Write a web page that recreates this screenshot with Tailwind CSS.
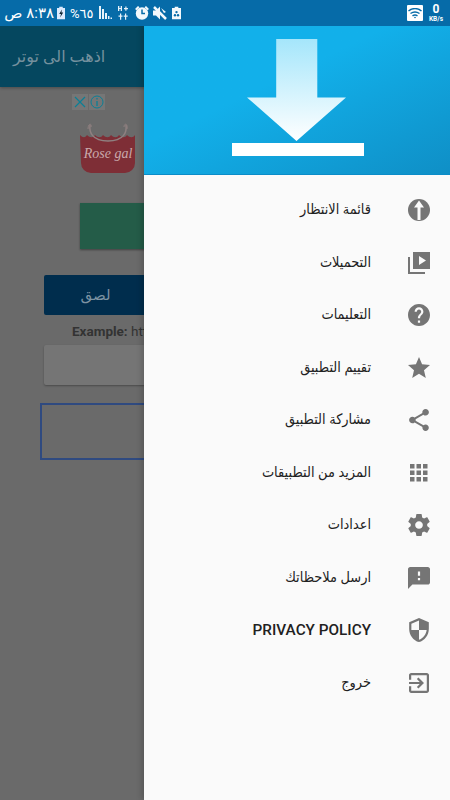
<!DOCTYPE html>
<html lang="ar">
  <head>
    <meta charset="UTF-8" />
    <meta name="viewport" content="width=device-width, initial-scale=1.0" />
    <title>Twitter Downloader</title>
    <script src="https://cdn.jsdelivr.net/npm/@tailwindcss/browser@4"></script>
  </head>
  <body class="w-[450px] h-[800px] overflow-hidden relative bg-[#6a6a6a] font-['Roboto','DejaVu_Sans',sans-serif]">
    <!-- status bar -->
    <div class="h-[26px] bg-[#066ba8] flex items-center justify-between pl-[7px] pr-[4px] text-white relative z-20">
      <div class="flex items-center">
        <span class="w-[47px] text-[15px] leading-none whitespace-nowrap" dir="rtl">٨:٣٨ ص</span>
        <svg class="ml-[3px]" width="8" height="14" viewBox="0 0 9 14"><path fill="#dbeafe" d="M2.500 0h4v1.500h2.500v12.500h-9v-12.500h2.500z"/><path fill="#0b2233" d="M5.500 3l-3 5h2l-1 4 3.500-5.500h-2z"/></svg>
        <span class="ml-[5px] w-[23px] text-[13px] leading-none whitespace-nowrap">%٦٥</span>
        <svg class="ml-[6px]" width="13" height="14" viewBox="0 0 13 14" fill="#e6f2fa"><path d="M0 0h2v13h-2zM3 3h2v10h-2zM6 7h2v6h-2zM9 10h1.500v3h-1.500zM11.500 11.500h1.500v1.500h-1.500z"/></svg>
        <svg class="ml-[6px]" width="10" height="14" viewBox="0 0 10 14" fill="#e6f2fa"><path d="M0 0h1.300v2h1.400v-2h1.300v5h-1.300v-2h-1.400v2h-1.300zM6 2h1.300v-1.500h1.200v1.500h1.500v1.200h-1.500v1.500h-1.200v-1.500h-1.300zM2 7.500h1.200v2h1.300v1.200h-1.300v3h-1.200v-3h-1.500v-1.200h1.500zM7 7.500h1.200v2h1.500v1.200h-1.500v3h-1.200v-3h-1.300v-1.200h1.300z"/></svg>
        <svg class="ml-[7px]" width="14" height="14" viewBox="0 0 14 14"><circle cx="7" cy="7.500" r="6.200" fill="#f2f8fc"/><path d="M7 3.500v4h3" stroke="#066ba8" stroke-width="1.500" fill="none"/><path d="M0 3l3-3 1.500 1.200-3 3zM14 3l-3-3-1.500 1.200 3 3z" fill="#f2f8fc"/></svg>
        <svg class="ml-[4px]" width="14" height="14" viewBox="0 0 14 14" fill="#f2f8fc"><path d="M0 4.500h3l4-4v13l-4-4h-3z"/><path d="M1 1l12 12" stroke="#f2f8fc" stroke-width="2.500"/><path d="M8 2l5 4-2 1z"/></svg>
        <svg class="ml-[5px]" width="9" height="14" viewBox="0 0 10 14"><path fill="#f2f8fc" d="M3 0h4v1.500h3v12.500h-10v-12.500h3z"/><circle cx="5" cy="6" r="1.300" fill="#066ba8"/><circle cx="3.300" cy="9.500" r="1.300" fill="#066ba8"/><circle cx="6.700" cy="9.500" r="1.300" fill="#066ba8"/></svg>
      </div>
      <div class="flex items-center">
        <div class="w-[16px] h-[16px] bg-white rounded-[1px] flex items-center justify-center">
          <svg width="14" height="11" viewBox="0 0 14 11" fill="none" stroke="#066ba8" stroke-width="1.500"><path d="M0.500 3c4-3 9-3 13 0M2.500 5.500c3-2 6-2 9 0M4.500 7.800c1.800-1.100 3.200-1.100 5 0"/><circle cx="7" cy="9.500" r="0.800" fill="#066ba8" stroke="none"/></svg>
        </div>
        <div class="w-[20px] ml-[3px] flex flex-col items-center font-bold">
          <span class="text-[12px] leading-[11px]">0</span>
          <span class="text-[6.500px] leading-[8px]">KB/s</span>
        </div>
      </div>
    </div>

    <!-- page behind the drawer, dimmed -->
    <div class="h-[61px] bg-[#05475f] flex items-center pl-[13px] shadow-[0_1px_3px_rgba(0,0,0,0.3)]">
      <span class="text-[16px] text-[#75919e]" dir="rtl">اذهب الى توتر</span>
    </div>
    <div class="flex justify-start pl-[72px] pt-[7px] gap-[1px]">
      <div class="w-[16px] h-[16px] bg-[#767676] flex items-center justify-center">
        <svg width="12" height="12" viewBox="0 0 12 12" stroke="#0b7f96" stroke-width="1.200"><path d="M1 1l10 10M11 1l-10 10"/></svg>
      </div>
      <div class="w-[16px] h-[16px] bg-[#767676] flex items-center justify-center">
        <svg width="14" height="14" viewBox="0 0 14 14" fill="none" stroke="#0b7f96" stroke-width="1"><circle cx="7" cy="7" r="6"/><path d="M7 6v5M7 3v1.500" stroke-width="1.300"/></svg>
      </div>
    </div>
    <div class="pl-[80px] pt-[13px]">
      <svg width="56" height="52" viewBox="0 0 56 52">
        <path d="M0 12c3 3 5 3 7 0c3 3 6 3 8 0c3 3 6 3 8 0c3 3 6 3 8 0c3 3 6 3 8 0c3 3 6 3 8 0c3 3 6 3 8 0v28a10 10 0 0 1-10 10h-34a10 10 0 0 1-10-10z" fill="#7e2e36"/>
        <path d="M10 2C9 9 12 18 28 18C44 18 47 9 46 2" fill="none" stroke="#8f8080" stroke-width="1.500"/>
        <path d="M8 6C8 0 12 0 11 4M44 4C44 0 48 0 47 6" fill="none" stroke="#8f8080" stroke-width="1"/>
        <text x="28" y="35" text-anchor="middle" font-size="14" font-style="italic" font-family="Liberation Serif" fill="#c9a9ab">Rose gal</text>
      </svg>
    </div>
    <div class="ml-[80px] mt-[28px] w-[120px] h-[46px] bg-[#245c48] shadow-[0_1px_2px_rgba(0,0,0,0.4)]"></div>
    <div class="ml-[44px] mt-[26px] w-[120px] h-[40px] bg-[#002d4d] rounded-[2px] flex items-center justify-center">
      <span class="text-[15px] text-[#7d93a3] -ml-[17px]" dir="rtl">لصق</span>
    </div>
    <div class="ml-[72px] mt-[8px] text-[13.500px] leading-[16px] text-[#333333] whitespace-nowrap"><b>Example:</b> https</div>
    <div class="ml-[44px] mt-[6px] w-[120px] h-[40px] bg-[#757575] rounded-[2px] shadow-[0_1px_2px_rgba(0,0,0,0.3)]"></div>
    <div class="ml-[40px] mt-[18px] w-[130px] h-[57px] border-2 border-[#2f4a80]"></div>

    <!-- navigation drawer -->
    <div class="absolute left-[144px] top-[26px] w-[306px] h-[774px] bg-[#fafafa] z-10 shadow-[-2px_0_6px_rgba(0,0,0,0.2)]">
      <div class="h-[149px] bg-gradient-to-br from-[#12b0ea] from-40% to-[#0f8fc6] flex flex-col items-center border-b border-[#0b8cc8]">
        <svg class="mt-[13px] -ml-[1px]" width="99" height="103" viewBox="0 0 100 104">
          <defs>
            <linearGradient id="arrow" x1="0" y1="0" x2="0" y2="1">
              <stop offset="0" stop-color="#a5e6fb" />
              <stop offset="1" stop-color="#ffffff" />
            </linearGradient>
          </defs>
          <path fill="url(#arrow)" d="M29.500 0h41.500v59h29l-50 44-50-44h29.500z"/>
        </svg>
        <div class="w-[132px] h-[13px] bg-white ml-[2px] mt-[1px]"></div>
      </div>

      <ul class="pt-[9px] text-[#212121] text-[14.400px] font-['Roboto','DejaVu_Sans_Condensed','DejaVu_Sans',sans-serif]">
        <li class="h-[52.500px] flex items-center justify-end">
          <span dir="rtl">قائمة الانتظار</span>
          <div class="w-[79px] flex justify-center pl-[17px]">
            <svg width="22" height="22" viewBox="0 0 22 22"><circle cx="11" cy="11" r="11" fill="#757575"/><path fill="#fafafa" d="M11 1.500l5 7h-3.500v12.500h-3v-12.500h-3.500z"/></svg>
          </div>
        </li>
        <li class="h-[52.500px] flex items-center justify-end">
          <span dir="rtl">التحميلات</span>
          <div class="w-[79px] flex justify-center pl-[17px]">
            <svg width="22" height="22" viewBox="0 0 22 22" fill="#757575"><path d="M5 0h17v17h-17zM11 4v9l7-4.500z" fill-rule="evenodd"/><path d="M0 5h2v15h15v2h-17z"/></svg>
          </div>
        </li>
        <li class="h-[52.500px] flex items-center justify-end">
          <span dir="rtl">التعليمات</span>
          <div class="w-[79px] flex justify-center pl-[17px]">
            <svg width="22" height="22" viewBox="2 2 20 20" fill="#757575"><path d="M12 2C6.480 2 2 6.480 2 12s4.480 10 10 10 10-4.480 10-10S17.520 2 12 2zm1 17h-2v-2h2v2zm2.070-7.750l-.9.920C13.450 12.900 13 13.500 13 15h-2v-.5c0-1.100.450-2.100 1.170-2.830l1.240-1.260c.370-.360.590-.860.590-1.410 0-1.100-.9-2-2-2s-2 .9-2 2H8c0-2.210 1.790-4 4-4s4 1.790 4 4c0 .880-.360 1.680-.930 2.250z"/></svg>
          </div>
        </li>
        <li class="h-[52.500px] flex items-center justify-end">
          <span dir="rtl">تقييم التطبيق</span>
          <div class="w-[79px] flex justify-center pl-[17px]">
            <svg width="22" height="22" viewBox="2 2 20 20" fill="#757575"><path d="M12 17.270L18.180 21l-1.640-7.030L22 9.240l-7.190-.610L12 2 9.190 8.630 2 9.240l5.460 4.730L5.820 21z"/></svg>
          </div>
        </li>
        <li class="h-[52.500px] flex items-center justify-end">
          <span dir="rtl">مشاركة التطبيق</span>
          <div class="w-[79px] flex justify-center pl-[17px]">
            <svg width="20" height="22" viewBox="3 2 18 20" fill="#757575"><path d="M18 16.080c-.760 0-1.440.3-1.960.770L8.910 12.700c.050-.230.090-.460.090-.7s-.040-.470-.090-.7l7.050-4.110c.540.500 1.250.810 2.040.810 1.660 0 3-1.340 3-3s-1.340-3-3-3-3 1.340-3 3c0 .240.040.470.090.7L8.040 9.810C7.500 9.310 6.790 9 6 9c-1.660 0-3 1.340-3 3s1.340 3 3 3c.790 0 1.500-.310 2.040-.810l7.120 4.160c-.050.210-.080.430-.080.650 0 1.610 1.310 2.920 2.920 2.920s2.920-1.310 2.920-2.920-1.310-2.920-2.920-2.920z"/></svg>
          </div>
        </li>
        <li class="h-[52.500px] flex items-center justify-end">
          <span dir="rtl">المزيد من التطبيقات</span>
          <div class="w-[79px] flex justify-center pl-[17px]">
            <svg width="22" height="22" viewBox="0 0 22 22" fill="#757575"><path d="M2 2h4.500v4.500h-4.500zM8.500 2h4.500v4.500h-4.500zM15 2h4.500v4.500h-4.500zM2 8.500h4.500v4.500h-4.500zM8.500 8.500h4.500v4.500h-4.500zM15 8.500h4.500v4.500h-4.500zM2 15h4.500v4.500h-4.500zM8.500 15h4.500v4.500h-4.500zM15 15h4.500v4.500h-4.500z"/></svg>
          </div>
        </li>
        <li class="h-[52.500px] flex items-center justify-end">
          <span dir="rtl">اعدادات</span>
          <div class="w-[79px] flex justify-center pl-[17px]">
            <svg width="22" height="22" viewBox="2 2 20 20" fill="#757575"><path d="M19.430 12.980c.040-.320.070-.640.070-.980s-.030-.660-.070-.980l2.110-1.650c.190-.150.240-.420.120-.640l-2-3.460c-.120-.220-.390-.3-.610-.220l-2.490 1c-.520-.4-1.080-.730-1.690-.980l-.380-2.650C14.460 2.180 14.250 2 14 2h-4c-.250 0-.460.180-.490.420l-.380 2.650c-.610.250-1.170.590-1.690.980l-2.490-1c-.230-.090-.490 0-.610.220l-2 3.460c-.130.220-.070.490.120.640l2.110 1.650c-.040.320-.070.650-.070.980s.030.660.070.980l-2.110 1.650c-.190.150-.240.420-.120.640l2 3.460c.120.220.390.3.610.220l2.490-1c.520.4 1.080.730 1.690.980l.380 2.650c.030.240.240.420.490.420h4c.250 0 .460-.180.490-.420l.380-2.650c.610-.250 1.170-.590 1.690-.980l2.490 1c.230.090.490 0 .610-.220l2-3.460c.120-.220.070-.490-.120-.640l-2.110-1.650zM12 15.500c-1.930 0-3.500-1.570-3.500-3.500s1.570-3.500 3.500-3.500 3.500 1.570 3.500 3.500-1.570 3.500-3.500 3.500z"/></svg>
          </div>
        </li>
        <li class="h-[52.500px] flex items-center justify-end">
          <span dir="rtl">ارسل ملاحظاتك</span>
          <div class="w-[79px] flex justify-center pl-[17px]">
            <svg width="22" height="22" viewBox="2 2 20 20" fill="#757575"><path d="M20 2H4c-1.100 0-1.990.9-1.990 2L2 22l4-4h14c1.100 0 2-.9 2-2V4c0-1.100-.9-2-2-2zm-7 12h-2v-2h2v2zm0-4h-2V6h2v4z"/></svg>
          </div>
        </li>
        <li class="h-[52.500px] flex items-center justify-end">
          <span class="font-medium text-[15.300px]">PRIVACY POLICY</span>
          <div class="w-[79px] flex justify-center pl-[17px]">
            <svg width="20" height="24" viewBox="3 1 18 22" fill="#757575"><path d="M12 1L3 5v6c0 5.550 3.840 10.740 9 12 5.160-1.260 9-6.450 9-12V5l-9-4zm0 10.990h7c-.530 4.120-3.280 7.790-7 8.940V12H5V6.300l7-3.110v8.800z"/></svg>
          </div>
        </li>
        <li class="h-[52.500px] flex items-center justify-end">
          <span dir="rtl">خروج</span>
          <div class="w-[79px] flex justify-center pl-[17px]">
            <svg width="20" height="20" viewBox="3 3 18 18" fill="#757575"><path d="M10.090 15.590L11.500 17l5-5-5-5-1.410 1.410L12.670 11H3v2h9.670l-2.580 2.590zM19 3H5c-1.110 0-2 .9-2 2v4h2V5h14v14H5v-4H3v4c0 1.100.890 2 2 2h14c1.100 0 2-.9 2-2V5c0-1.100-.9-2-2-2z"/></svg>
          </div>
        </li>
      </ul>
    </div>
  </body>
</html>
